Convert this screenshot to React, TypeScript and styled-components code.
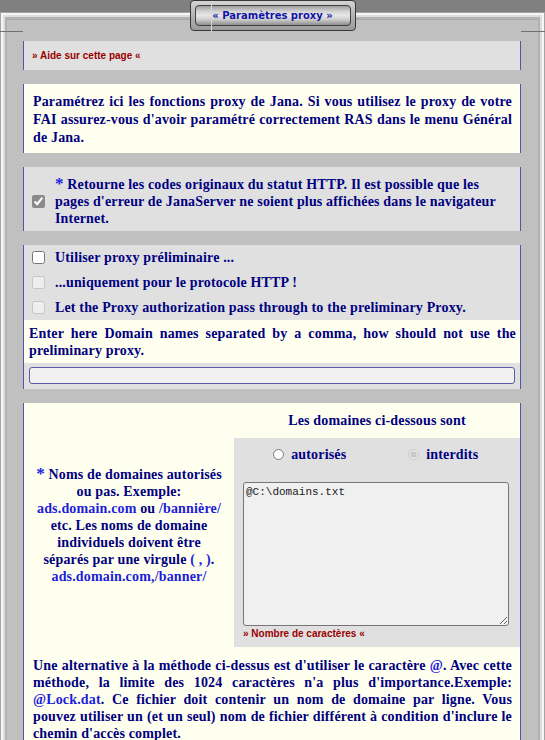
import React from 'react';
import styled, { createGlobalStyle } from 'styled-components';

const Global = createGlobalStyle`
  html, body { margin: 0; padding: 0; background: #808080; }
  body { font-family: "Liberation Serif", "Times New Roman", serif; }
`;

const Page = styled.div`
  position: relative;
  padding-top: 12px;
  width: 545px;
`;

const Frame = styled.div`
  position: relative;
  box-sizing: border-box;
  min-height: 728px;
  background: #c0c0c0;
  padding: 29px 24px 20px 23px;
  display: flex;
  flex-direction: column;
  gap: 14px;
  box-shadow:
    inset 0 1px 0 #a4a4a4, inset 1px 0 0 #a4a4a4, inset -1px 0 0 #a4a4a4,
    inset 0 3px 0 #f6f6f6, inset 3px 0 0 #f6f6f6, inset -3px 0 0 #f6f6f6,
    inset 0 5px 0 #dedede, inset 5px 0 0 #dedede, inset -5px 0 0 #dedede,
    inset 0 7px 0 #b2b2b2, inset 7px 0 0 #b2b2b2, inset -7px 0 0 #b2b2b2,
    inset 0 8px 0 #a8a8a8;
  &::before, &::after {
    content: '';
    position: absolute;
    top: 19px;
    height: 1px;
    background: #707070;
  }
  &::before { left: 0; width: 23px; }
  &::after { right: 0; width: 24px; }
`;

const Tab = styled.div`
  position: absolute;
  top: 0;
  left: 50%;
  transform: translateX(-50%);
  width: 166px;
  height: 31px;
  box-sizing: border-box;
  border: 1px solid #383838;
  border-radius: 4px;
  background: linear-gradient(#d4d4d4, #b4b4b4 50%, #9a9a9a);
  padding: 4px;
  z-index: 2;
`;

const TabInner = styled.div`
  height: 100%;
  box-sizing: border-box;
  border: 1px solid #404040;
  border-radius: 4px;
  background: linear-gradient(#9e9e9e 0%, #d6d6d6 30%, #e6e6e6 50%, #cfcfcf 70%, #8e8e8e 100%);
  display: flex;
  align-items: center;
  justify-content: center;
  font-family: "DejaVu Sans", Verdana, sans-serif;
  font-weight: bold;
  font-size: 10px;
  color: #1414a8;
`;

const TabMark = styled.span`
  position: absolute;
  left: 20px;
  top: 0;
  width: 1px;
  height: 32px;
  background: #d8d8d8;
`;

const Card = styled.section<{ $bg?: string }>`
  background: ${p => p.$bg ?? '#e0e0e0'};
  border-left: 1px solid #5454a8;
  border-right: 1px solid #5454a8;
  color: #000080;
  font-weight: bold;
  font-size: 14px;
  letter-spacing: 0.16px;
`;

const HelpBar = styled.div`
  height: 29px;
  display: flex;
  align-items: center;
  padding-left: 8px;
`;

const RedLink = styled.span`
  font-family: "Liberation Sans", Arial, sans-serif;
  font-weight: bold;
  font-size: 10px;
  letter-spacing: 0;
  color: #990000;
`;

const Para = styled.p<{ $lh?: number; $pad?: string; $align?: string }>`
  margin: 0;
  line-height: ${p => p.$lh ?? 17}px;
  padding: ${p => p.$pad ?? '0'};
  text-align: ${p => p.$align ?? 'justify'};
`;

const Blue = styled.span<{ $big?: boolean }>`
  color: #1c1cdc;
  font-size: ${p => (p.$big ? '17px' : 'inherit')};
`;

const CheckRow = styled.label<{ $h?: number }>`
  display: grid;
  grid-template-columns: 31px 1fr;
  align-items: center;
  min-height: ${p => p.$h ?? 25}px;
  line-height: 17px;
`;

const CheckBox = styled.input<{ $gray?: boolean }>`
  margin: 0 0 0 8px;
  width: 13px;
  height: 13px;
  accent-color: ${p => (p.$gray ? '#8a8a8a' : 'auto')};
`;

const CheckText = styled.span`
  padding-right: 8px;
`;

const CheckCard = styled.div`
  padding: 8px 0 4px;
`;

const Ivory = styled.div`
  background: #ffffef;
`;

const InputRow = styled.div`
  padding: 4px 5px 5px;
`;

const TextInput = styled.input`
  display: block;
  box-sizing: border-box;
  width: 100%;
  height: 17px;
  margin: 0;
  border: 1px solid #5a5aa8;
  border-radius: 3px;
  background: #f0f0f0;
`;

const DomainGrid = styled.div`
  display: grid;
  grid-template-columns: 210px 286px;
  grid-template-rows: 35px auto auto;
  background: #ffffef;
`;

const LeftCell = styled.div`
  grid-row: 1 / span 2;
  display: flex;
  align-items: center;
  justify-content: center;
  text-align: center;
  line-height: 17px;
`;

const HeadCell = styled.div`
  display: flex;
  align-items: center;
  justify-content: center;
`;

const GrayCell = styled.div`
  background: #e0e0e0;
  padding: 0 10px 7px 9px;
`;

const RadioRow = styled.div`
  display: grid;
  grid-template-columns: 1fr 1fr;
  height: 33px;
  align-items: center;
`;

const RadioLabel = styled.label`
  display: flex;
  align-items: center;
  justify-content: center;
  gap: 7px;
`;

const Radio = styled.input`
  margin: 0;
  width: 11px;
  height: 11px;
  accent-color: #8a8a8a;
`;

const Area = styled.textarea`
  display: block;
  box-sizing: border-box;
  width: 266px;
  height: 144px;
  margin: 11px 0 0;
  padding: 3px 2px;
  border: 1px solid #767676;
  border-radius: 3px;
  background: #f0f0f0;
  font-family: "Liberation Mono", "Courier New", monospace;
  font-size: 11px;
  letter-spacing: 0;
  color: #202020;
`;

const Counter = styled.div`
  line-height: 12px;
  margin-top: 1px;
`;

const WideCell = styled.div`
  grid-column: 1 / span 2;
`;

export default function App() {
  return (
    <Page>
      <Global />
      <Tab>
        <TabInner>« Paramètres proxy »</TabInner>
        <TabMark />
      </Tab>
      <Frame>
        <Card>
          <HelpBar>
            <RedLink>» Aide sur cette page «</RedLink>
          </HelpBar>
        </Card>

        <Card $bg="#ffffef">
          <Para $lh={18} $pad="9px 8px 6px 9px">
            Paramétrez ici les fonctions proxy de Jana. Si vous utilisez le proxy de votre FAI assurez-vous
            d'avoir paramétré correctement RAS dans le menu Général de Jana.
          </Para>
        </Card>

        <Card>
          <CheckCard>
            <CheckRow>
              <CheckBox type="checkbox" defaultChecked $gray />
              <CheckText>
                <Blue $big>*</Blue> Retourne les codes originaux du statut HTTP. Il est possible que les pages
                d'erreur de JanaServer ne soient plus affichées dans le navigateur Internet.
              </CheckText>
            </CheckRow>
          </CheckCard>
        </Card>

        <Card>
          <CheckRow>
            <CheckBox type="checkbox" />
            <CheckText>Utiliser proxy préliminaire ...</CheckText>
          </CheckRow>
          <CheckRow>
            <CheckBox type="checkbox" disabled />
            <CheckText>...uniquement pour le protocole HTTP !</CheckText>
          </CheckRow>
          <CheckRow>
            <CheckBox type="checkbox" disabled />
            <CheckText>Let the Proxy authorization pass through to the preliminary Proxy.</CheckText>
          </CheckRow>
          <Ivory>
            <Para $pad="5px 4px 4px 5px">
              Enter here Domain names separated by a comma, how should not use the preliminary proxy.
            </Para>
          </Ivory>
          <InputRow>
            <TextInput type="text" />
          </InputRow>
        </Card>

        <Card $bg="#ffffef">
          <DomainGrid>
            <LeftCell>
              <Para $align="center">
                <Blue $big>*</Blue> Noms de domaines autorisés
                <br />
                ou pas. Exemple:
                <br />
                <Blue>ads.domain.com</Blue> ou <Blue>/bannière/</Blue>
                <br />
                etc. Les noms de domaine
                <br />
                individuels doivent être
                <br />
                séparés par une virgule <Blue>( , )</Blue>.
                <br />
                <Blue>ads.domain.com,/banner/</Blue>
              </Para>
            </LeftCell>
            <HeadCell>Les domaines ci-dessous sont</HeadCell>
            <GrayCell>
              <RadioRow>
                <RadioLabel>
                  <Radio type="radio" name="mode" />
                  autorisés
                </RadioLabel>
                <RadioLabel>
                  <Radio type="radio" name="mode" defaultChecked disabled />
                  interdits
                </RadioLabel>
              </RadioRow>
              <Area defaultValue={'@C:\\domains.txt'} />
              <Counter>
                <RedLink>» Nombre de caractères «</RedLink>
              </Counter>
            </GrayCell>
            <WideCell>
              <Para $pad="10px 8px 10px 9px">
                Une alternative à la méthode ci-dessus est d'utiliser le caractère <Blue>@</Blue>. Avec cette
                méthode, la limite des 1024 caractères n'a plus d'importance.Exemple: <Blue>@Lock.dat</Blue>. Ce
                fichier doit contenir un nom de domaine par ligne. Vous pouvez utiliser un (et un seul) nom de
                fichier différent à condition d'inclure le chemin d'accès complet.
              </Para>
            </WideCell>
          </DomainGrid>
        </Card>
      </Frame>
    </Page>
  );
}
